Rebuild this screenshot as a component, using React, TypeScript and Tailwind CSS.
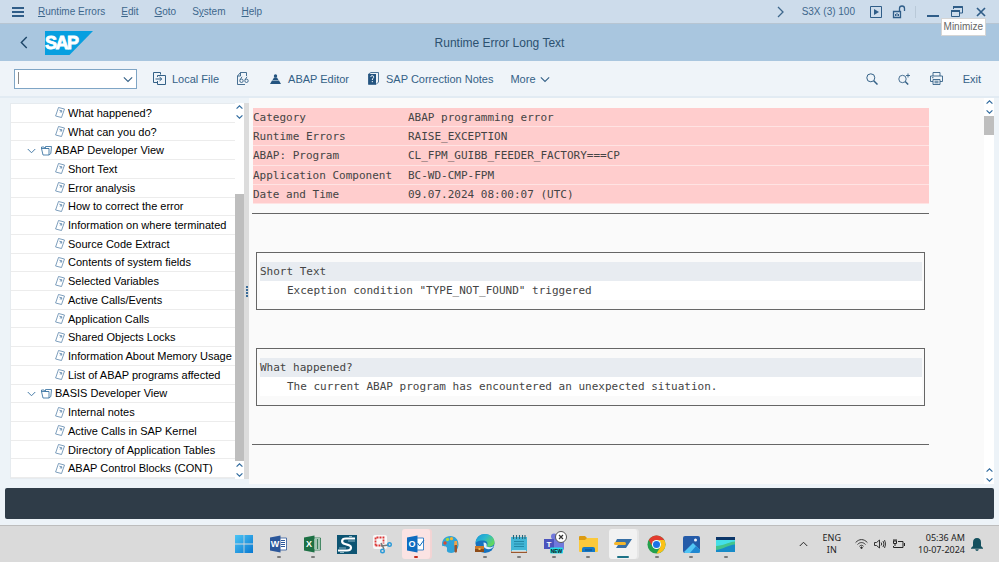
import type { ReactNode } from "react";

const sections = [
  { label: "What happened?" },
  { label: "What can you do?" },
  { label: "ABAP Developer View", folder: true },
  { label: "Short Text" },
  { label: "Error analysis" },
  { label: "How to correct the error" },
  { label: "Information on where terminated" },
  { label: "Source Code Extract" },
  { label: "Contents of system fields" },
  { label: "Selected Variables" },
  { label: "Active Calls/Events" },
  { label: "Application Calls" },
  { label: "Shared Objects Locks" },
  { label: "Information About Memory Usage" },
  { label: "List of ABAP programs affected" },
  { label: "BASIS Developer View", folder: true },
  { label: "Internal notes" },
  { label: "Active Calls in SAP Kernel" },
  { label: "Directory of Application Tables" },
  { label: "ABAP Control Blocks (CONT)" },
];

const summary = [
  ["Category", "ABAP programming error"],
  ["Runtime Errors", "RAISE_EXCEPTION"],
  ["ABAP: Program", "CL_FPM_GUIBB_FEEDER_FACTORY===CP"],
  ["Application Component", "BC-WD-CMP-FPM"],
  ["Date and Time", "09.07.2024 08:00:07 (UTC)"],
];

function Chevron({ dir, className }: { dir: "up" | "down" | "left" | "right"; className: string }) {
  const d = {
    up: "M1 8 6 3l5 5",
    down: "M1 4l5 5 5-5",
    left: "M9 1 4 6l5 5",
    right: "M4 1l5 5-5 5",
  }[dir];
  return (
    <svg viewBox="0 0 12 12" className={className} fill="none" stroke="currentColor" strokeWidth="1.300">
      <path d={d} />
    </svg>
  );
}

function MenuBar() {
  const btn = "flex h-5 items-center justify-center";
  return (
    <header className="flex h-[23px] items-center bg-[#cddceb] text-[#3d678c]">
      <button aria-label="Menu" className="ml-3 mr-[14px] flex flex-col gap-[2px]">
        <span className="h-[2px] w-3 bg-[#2f5d88]" />
        <span className="h-[2px] w-3 bg-[#2f5d88]" />
        <span className="h-[2px] w-3 bg-[#2f5d88]" />
      </button>
      <nav className="flex flex-1 gap-4 text-[10px]">
        <button><u>R</u>untime Errors</button>
        <button><u>E</u>dit</button>
        <button><u>G</u>oto</button>
        <button>S<u>y</u>stem</button>
        <button><u>H</u>elp</button>
      </nav>
      <button aria-label="Next session" className={btn}><Chevron dir="right" className="size-3" /></button>
      <span className="ml-4 text-[10px]">S3X (3) 100</span>
      <button aria-label="Run" className={btn + " ml-[14px]"}>
        <svg viewBox="0 0 14 14" className="size-[14px]" fill="none" stroke="#2f5d88">
          <path d="M1.5 1.5h11v11h-11z" /><path d="M5 4v6l5-3z" fill="#2f5d88" stroke="none" />
        </svg>
      </button>
      <button aria-label="Unlock" className={btn + " ml-[9px]"}>
        <svg viewBox="0 0 14 14" className="size-[14px]" fill="none" stroke="#2f5d88">
          <path d="M1.5 6.5h7v6h-7zM7.500 6.500V3.500a2.500 2.500 0 0 1 5 0V6" strokeWidth="1.300" /><path d="M5 8v3M3.500 9v2M6.500 9v2" />
        </svg>
      </button>
      <span className="ml-[9px] h-3 w-px bg-[#b9c9d8]" />
      <button aria-label="Minimize" className={btn + " ml-[11px]"}>
        <svg viewBox="0 0 12 12" className="size-3"><path d="M0 9h12v2H0z" fill="#2f5d88" /></svg>
      </button>
      <button aria-label="Restore" className={btn + " ml-[11px]"}>
        <svg viewBox="0 0 13 13" className="size-[13px]" fill="none" stroke="#2f5d88">
          <path d="M3.500 4V1.500h9V8H10M1.500 5.500h8v6h-8z" /><path d="M3 2h9.500M1 6h9" strokeWidth="2" />
        </svg>
      </button>
      <button aria-label="Close" className={btn + " mx-[13px]"}>
        <svg viewBox="0 0 10 10" className="size-[10px]" stroke="#2f5d88" strokeWidth="1.700"><path d="m1 1 8 8M9 1 1 9" /></svg>
      </button>
    </header>
  );
}

function TitleBar() {
  return (
    <div className="grid h-[38px] grid-cols-[1fr_auto_1fr] items-center border-t border-[#b7c5d2] bg-[#a9c6df]">
      <div className="flex items-center">
        <button aria-label="Back" className="ml-[17px] text-[#1d4668]"><Chevron dir="left" className="size-[13px]" /></button>
        <svg viewBox="0 0 48 24" className="ml-[15px] h-6 w-12" role="img" aria-label="SAP">
          <path d="M0 0h48L24.500 24H0z" fill="#079fe0" />
          <text x="0" y="18" fontFamily="Liberation Sans, sans-serif" fontWeight="700" fontSize="18" fill="#fff" stroke="#fff" strokeWidth=".8">
            <tspan x="0">S</tspan><tspan x="10.500">A</tspan><tspan x="22">P</tspan>
          </text>
        </svg>
      </div>
      <h1 className="text-xs text-[#2c5170]">Runtime Error Long Text</h1>
      <span />
    </div>
  );
}

function Toolbar() {
  const item = "flex items-center text-[11px] leading-4";
  return (
    <div className="flex h-[37px] items-center border-b-2 border-[#e2ebf3] bg-[#eff4f9] text-[#346187]">
      <div className="relative ml-[14px] w-[123px]">
        <input aria-label="Command" className="block h-5 w-full border border-[#7fa5c5] bg-white px-1 text-[11px] outline-none" />
        <span className="absolute left-1 top-[3px] h-3 w-px bg-[#888]" />
        <Chevron dir="down" className="absolute right-1 top-[5px] size-[10px]" />
      </div>
      <button className={item + " ml-4 gap-[6px]"}>
        <svg viewBox="0 0 13 13" className="size-[13px]" fill="none" stroke="currentColor">
          <path d="M4 10.500H.5V.5h7v2M4.500 9V12.500h8v-9h-8V5M2.500 7h6M6.500 5l2.300 2-2.300 2" />
        </svg>
        Local File
      </button>
      <button aria-label="Display" className={item + " ml-[17px]"}>
        <svg viewBox="0 0 13 13" className="size-[13px]" fill="none" stroke="currentColor" strokeWidth=".9">
          <path d="M1.500 12.500V4L4.500.5h6V4M1.500 4h3V.5M1.500 12.500H9" /><circle cx="5.500" cy="8.800" r="1.700" /><circle cx="10.500" cy="8.800" r="1.700" /><path d="M4 7.800 6 4.800M9 7.800l2-3" />
        </svg>
      </button>
      <button className={item + " ml-[21px] gap-[7px]"}>
        <svg viewBox="0 0 11 12" className="h-3 w-[11px]" fill="#245480">
          <circle cx="5.500" cy="3" r="1.700" /><path d="M4 4.500h3L8.500 7h-6zM2 7.500h7l2 3.500H0z" />
        </svg>
        ABAP Editor
      </button>
      <button className={item + " ml-[19px] gap-[7px]"}>
        <svg viewBox="0 0 11 13" className="h-[13px] w-[11px]">
          <path d="M.5 2 3 .5h7.500V10L8 12.500H.5z" fill="#eff4f9" stroke="#245480" strokeWidth=".8" /><path d="M.5 2H8v10H.5z" fill="#245480" />
          <path d="M2.700 5c.2-2 3.400-1.500 3 .2C5.500 6.200 4.300 6.300 4.300 8M4.300 9v1.200" fill="none" stroke="#fff" />
        </svg>
        SAP Correction Notes
      </button>
      <button className={item + " ml-[17px] gap-1"}>More <Chevron dir="down" className="size-[10px]" /></button>
      <div className="ml-auto flex items-center gap-5">
        <button aria-label="Find">
          <svg viewBox="0 0 12 12" className="block size-3" fill="none" stroke="currentColor"><circle cx="4.800" cy="4.800" r="4" /><path d="m7.700 7.700 3.800 3.800" strokeWidth="1.500" /></svg>
        </button>
        <button aria-label="Find next">
          <svg viewBox="0 0 12 12" className="block size-3" fill="none" stroke="currentColor" strokeWidth=".9"><circle cx="4.500" cy="6" r="3.700" /><path d="m7.200 8.600 3 3" strokeWidth="1.400" /><path d="M10 .5v4M8 2.500h4" /></svg>
        </button>
        <button aria-label="Print">
          <svg viewBox="0 0 13 13" className="block size-[13px]" fill="none" stroke="currentColor" strokeWidth=".9"><path d="M3 4V.5h7V4M3 9.500H.5V4h12v5.500H10M3 7.500h7v5H3zM4.500 9.200h4M4.500 10.800h4M2 5.700h1.500" /></svg>
        </button>
        <button className="mr-[18px] text-[11px] leading-4">Exit</button>
      </div>
    </div>
  );
}

function Arrows() {
  return (
    <span className="flex flex-col items-center gap-[2px] py-px text-[#2f6a9e]">
      <Chevron dir="up" className="size-[7px] stroke-2" />
      <Chevron dir="down" className="size-[7px] stroke-2" />
    </span>
  );
}

function Tree() {
  return (
    <aside className="flex py-[5px] pl-[10px]">
      <ul className="flex w-[225px] flex-col border-y border-l border-[#e6ebef] bg-white text-[11px] text-black">
        {sections.map((s) => (
          <li key={s.label} className="flex flex-1 items-center border-b border-[#ececec] whitespace-nowrap">
            {s.folder ? (
              <button className="flex items-center pl-4 leading-4">
                <Chevron dir="down" className="mr-[5px] size-[9px] text-[#4278a5]" />
                <svg viewBox="0 0 11 11" className="mr-[3px] size-[11px]" fill="none" stroke="#4278a5" strokeWidth=".9">
                  <path d="M.5 4V2h2.500l1 1.500h4V10H2L.500 3.500H8M4.500 3V1.500h6L9.800 8.500 8 10" />
                </svg>
                {s.label}
              </button>
            ) : (
              <button className="flex items-center pl-11 leading-4">
                <svg viewBox="0 0 10 11" className="mr-[3px] h-[11px] w-[10px]" fill="none" stroke="#6f94b5" strokeWidth=".9">
                  <path d="M3.500.5 9.500 2 6.500 10.500.6 9zM4.300 3.200l2.700.7-.8 1.800M7 3.900 4.800 5.200" />
                </svg>
                {s.label}
              </button>
            )}
          </li>
        ))}
      </ul>
      <div className="flex w-[9px] flex-col bg-white">
        <Arrows />
        <div className="flex-[73]" />
        <div className="flex-[266] bg-[#bebebe]" />
        <Arrows />
      </div>
      <div className="flex w-[5px] flex-col items-center justify-center gap-px bg-[#dcdcdc]">
        <span className="h-[2px] w-[2px] bg-[#3b6c98]" />
        <span className="h-[2px] w-[2px] bg-[#3b6c98]" />
        <span className="h-[2px] w-[2px] bg-[#3b6c98]" />
        <span className="h-[2px] w-[2px] bg-[#3b6c98]" />
      </div>
    </aside>
  );
}

function Box({ title, children }: { title: string; children: ReactNode }) {
  return (
    <section className="mx-1 flex h-[58px] flex-col justify-center border border-[#666] pr-[2px] pl-[3px]">
      <h2 className="h-[19px] bg-[#e8ecf1] leading-[19px]">{title}</h2>
      <p className="h-[19px] bg-white pl-[27px] leading-[19px]">{children}</p>
    </section>
  );
}

function Report() {
  return (
    <main className="flex flex-1 bg-[#fafafa]">
      <div className="mr-[55px] flex-1 pt-[10px] pl-[3px] font-['DejaVu_Sans_Mono',monospace] text-[11px] text-[#444]">
        <table className="ml-px h-24 w-[calc(100%-1px)] border-collapse">
          <tbody>
            {summary.map(([k, v]) => (
              <tr key={k} className="border-b border-[#ffe3e3] bg-[#ffcdcd]">
                <th scope="row" className="w-[155px] p-0 pt-px text-left leading-[17px] font-normal">{k}</th>
                <td className="p-0 pt-px leading-[17px]">{v}</td>
              </tr>
            ))}
          </tbody>
        </table>
        <hr className="mt-[9px] mb-[38px] border-[#666]" />
        <Box title="Short Text">Exception condition "TYPE_NOT_FOUND" triggered</Box>
        <div className="h-[38px]" />
        <Box title="What happened?">The current ABAP program has encountered an unexpected situation.</Box>
        <hr className="mt-[38px] border-[#666]" />
      </div>
      <div className="flex w-[10px] flex-col bg-white">
        <Arrows />
        <div className="h-[19px] bg-[#bebebe]" />
        <div className="flex-1" />
        <Arrows />
      </div>
    </main>
  );
}

function Office({ color, letter, children }: { color: string; letter: string; children: ReactNode }) {
  return (
    <svg viewBox="0 0 18 18" className="size-[18px]">
      <path d="M9 3h7.500v12H9z" fill="#fff" stroke={color} strokeWidth=".8" />
      {children}
      <path d="M0 2.500 10.500.5v17L0 15.500z" fill={color} />
      <text x="5" y="12.300" textAnchor="middle" fontFamily="Liberation Sans, sans-serif" fontWeight="700" fontSize="9" fill="#fff">{letter}</text>
    </svg>
  );
}

const apps: { name: string; open?: "idle" | "alert" | "active"; icon: ReactNode }[] = [
  { name: "Start", icon: (
    <svg viewBox="0 0 18 18" className="size-[18px]"><defs><linearGradient id="win" x2="1" y2="1"><stop stopColor="#4cc5f5" /><stop offset="1" stopColor="#0878d1" /></linearGradient></defs><path d="M0 0h8.600v8.600H0zM9.400 0H18v8.600H9.400zM0 9.400h8.600V18H0zM9.400 9.400H18V18H9.400z" fill="url(#win)" /></svg>
  ) },
  { name: "Word", open: "idle", icon: <Office color="#2b579a" letter="W"><path d="M11 5.500h4M11 7.500h4M11 9.500h4M11 11.500h4" stroke="#2b579a" /></Office> },
  { name: "Excel", open: "idle", icon: <Office color="#1d7044" letter="X"><path d="M11 5h5M11 7h5M11 9h5M11 11h5M11 13h5M13.500 4v10" stroke="#1d7044" strokeWidth=".8" /></Office> },
  { name: "Snagit", icon: (
    <svg viewBox="0 0 20 19" className="h-[19px] w-5"><path d="M0 0h20v19H0z" fill="#0d5472" /><path d="M18 3.500H9C4 3.500 4 8 8 9s6 1.500 6 3.500-2 3-4 3H1" fill="none" stroke="#fff" strokeWidth="2.200" /><path d="M18 6h-7M2 13h7M12 1.500h3M3 17.500h4" stroke="#bfe0ea" strokeWidth=".7" /></svg>
  ) },
  { name: "Snipping Tool", icon: (
    <svg viewBox="0 0 20 20" className="size-5"><rect x="1" y="1" width="14" height="14" rx="2" fill="#f8f8f8" /><path d="M3.500 11.500v-8h8v6M3.500 11.500h5" fill="none" stroke="#db3535" strokeWidth="1.800" strokeDasharray="2 1" /><path d="m9 9 3 6m-3-3 8-1" stroke="#777" strokeWidth="1.500" /><circle cx="10.500" cy="17" r="1.800" fill="none" stroke="#2c9bd9" strokeWidth="1.400" /><circle cx="17.500" cy="10.500" r="1.800" fill="none" stroke="#2c9bd9" strokeWidth="1.400" /></svg>
  ) },
  { name: "Outlook", open: "alert", icon: <Office color="#0f6cc0" letter="O"><path d="m10.500 8 2.200 3L17 5" fill="none" stroke="#0f6cc0" /></Office> },
  { name: "Paint", icon: (
    <svg viewBox="0 0 19 19" className="size-[19px]"><path d="M9.500 1C4 1 1 5 1 9.500c0 3 3 1 4.500 2.500s-1 4.500 2 5.500c6 2 10-3 10-8S14 1 9.500 1" fill="#2fa3d8" /><circle cx="4" cy="8" r="1.700" fill="#d74a32" /><circle cx="6.500" cy="4.500" r="1.700" fill="#a8d83d" /><circle cx="10.500" cy="3.700" r="1.600" fill="#f2b734" /><path d="M13.500 6h2.500l.5 5h-3.500z" fill="#f2a44a" /><path d="M13.500 10h2.500v6c0 2-2.500 2-2.500 0z" fill="#9c532c" /></svg>
  ) },
  { name: "Edge", open: "idle", icon: (
    <svg viewBox="0 0 20 20" className="size-5"><defs><linearGradient id="edge" x2="1" y2=".6"><stop stopColor="#1695d8" /><stop offset=".5" stopColor="#2cb7cf" /><stop offset="1" stopColor="#63d85c" /></linearGradient></defs><circle cx="10" cy="9.500" r="9.500" fill="#1572bf" /><path d="M.5 9C1 3 5 0 10 0c6 0 9.500 4 9.500 8 0 4-4 5.500-8 4.500 2-2 1-6-3-6C5 6.500 2 7 .5 9" fill="url(#edge)" /><path d="M8.500 8.500q4 0 3 4c3 1.500 6 .7 7.500-1-1 4-8 5-10 1.500z" fill="#dceefa" /><path d="M0 12h9v6H0z" fill="#c9792b" /><path d="M0 15h9v3H0z" fill="#8e4c18" /><path d="M3.500 14h2v2h-2z" fill="#f2c04d" /></svg>
  ) },
  { name: "Notepad", open: "idle", icon: (
    <svg viewBox="0 0 16 19" className="h-[19px] w-4"><path d="M0 2h16v14H0z" fill="#42b6d6" /><path d="M0 16.500h16V18H0z" fill="#9a572d" /><path d="M1 15.300h14v1.200H1z" fill="#eef8fb" /><path d="M3 6.500h10M3 9h10M3 11.500h10" stroke="#197c9b" strokeWidth=".8" /><path d="M2.500 0v4M5.500 0v4M8.500 0v4M11.500 0v4M14 0v4" stroke="#2a6679" strokeWidth="1.100" /></svg>
  ) },
  { name: "Teams", open: "idle", icon: (
    <svg viewBox="0 0 24 24" className="size-6 overflow-visible"><path d="M9 7h13v9c0 5-12 5-13 0z" fill="#7178dc" /><circle cx="12" cy="4.500" r="3" fill="#7178dc" /><path d="M2 7h10v10H2z" fill="#4b53bc" /><text x="7" y="15" textAnchor="middle" fontFamily="Liberation Sans, sans-serif" fontWeight="700" fontSize="8" fill="#fff">T</text><rect x="8" y="15.500" width="13" height="6" rx="1" fill="#25dce6" /><text x="14.500" y="20.500" textAnchor="middle" fontFamily="Liberation Sans, sans-serif" fontWeight="700" fontSize="5" fill="#111">NEW</text><circle cx="19" cy="5" r="5.500" fill="#fff" stroke="#555" /><path d="m17 3 4 4m0-4-4 4" stroke="#333" strokeWidth="1.200" /></svg>
  ) },
  { name: "File Explorer", open: "idle", icon: (
    <svg viewBox="0 0 19 17" className="h-[17px] w-[19px]"><path d="M0 1q0-1 1-1h5l2 2h10q1 0 1 1v12H0z" fill="#dc9b12" /><path d="M0 4h6l2-2h11v13q0 1-1 1H1q-1 0-1-1z" fill="#fbc93b" /><path d="M3 16v-3q0-2 2-2h9q2 0 2 2v3z" fill="#1579c6" /><path d="M6 14h7" stroke="#0c4c86" /></svg>
  ) },
  { name: "SAP Logon", open: "active", icon: (
    <svg viewBox="0 0 18 10" className="h-[10px] w-[18px]"><path d="M3 0h15l-6 9H2l2-3h6l1-2H1z" fill="#376fa5" /><rect y="3" width="12" height="3" rx="1.500" fill="#f4b62b" /></svg>
  ) },
  { name: "Chrome", open: "idle", icon: (
    <svg viewBox="0 0 20 20" className="size-[19px]"><circle cx="10" cy="10" r="9.500" fill="#24a14d" /><path d="M1.800 5.300A9.500 9.500 0 0 1 18.200 5.300H10a4.700 4.700 0 0 0-4 7z" fill="#e33b2e" /><path d="M18.200 5.300A9.500 9.500 0 0 1 10 19.500l4-7a4.700 4.700 0 0 0-4-7.200z" fill="#fbc116" /><circle cx="10" cy="10" r="4.800" fill="#fff" /><circle cx="10" cy="10" r="3.700" fill="#1c73e6" /></svg>
  ) },
  { name: "Photos", open: "idle", icon: (
    <svg viewBox="0 0 17 17" className="size-[17px]"><rect width="17" height="17" rx="2" fill="#245ba8" /><path d="M1 16 10 7l7 7v1q0 2-2 2H2z" fill="#52c5f4" /><path d="m7 17 6-7 4 4v1q0 2-2 2z" fill="#2087d1" /><circle cx="12.500" cy="4" r="1.500" fill="#f1f4fb" /></svg>
  ) },
  { name: "Remote Desktop", open: "idle", icon: (
    <svg viewBox="0 0 19 15" className="h-[15px] w-[19px]"><path d="M0 0h19v15H0z" fill="#178bc8" /><path d="M0 0h19v3H0z" fill="#0b3669" /><path d="M0 3h19v2C11 6 7 10 0 11z" fill="#45dfe8" /><path d="M0 9C7 9 12 5 19 4.500v3C12 8 8 12 0 13z" fill="#43c48d" /></svg>
  ) },
];

function Taskbar() {
  return (
    <footer className="flex h-[37px] items-center border-t border-[#bdbdbd] bg-[#dadada] font-['Noto_Sans',sans-serif] text-[#222]">
      <nav aria-label="Taskbar" className="ml-[227px] grid w-[516px] grid-cols-[repeat(15,1fr)]">
        {apps.map((a) => (
          <button
            key={a.name}
            aria-label={a.name}
            className={
              "relative mx-auto flex h-[30px] w-7 items-center justify-center rounded-[3px] " +
              (a.open === "alert" ? "bg-[#fbe3e3] shadow-[2px_0_0_#f3d4d4]" : a.open === "active" ? "bg-[#f2f2f2] shadow-[2px_0_0_#e6e6e6]" : "")
            }
          >
            {a.icon}
            {a.open && (
              <span
                className={
                  "absolute bottom-px h-[2px] rounded-full " +
                  (a.open === "active" ? "w-3 bg-[#1c7286]" : a.open === "alert" ? "w-1 bg-[#c42b1c]" : "w-1 bg-[#7a7a7a]")
                }
              />
            )}
          </button>
        ))}
      </nav>
      <div className="ml-auto mr-4 flex items-center">
        <button aria-label="Hidden icons"><Chevron dir="up" className="block size-[9px]" /></button>
        <button className="ml-[15px] text-center text-[9px] leading-3">ENG<br />IN</button>
        <button aria-label="Network, sound, battery" className="ml-[14px] flex items-center gap-[6px]">
          <svg viewBox="0 0 13 10" className="h-[10px] w-[13px]" fill="none" stroke="#222" strokeWidth=".9"><path d="M.6 3.600c3.500-4 8.300-4 11.800 0M2.500 5.500c2.500-2.600 5.500-2.600 8 0M4.400 7.300c1.500-1.400 2.700-1.400 4.200 0" /><circle cx="6.500" cy="8.700" r=".8" fill="#222" /></svg>
          <svg viewBox="0 0 12 10" className="h-[10px] w-3" fill="none" stroke="#222" strokeWidth=".9"><path d="M.5 3.500h2L5.500 1v8l-3-2.500h-2zM7.200 3.500q1 1.500 0 3M9 2q2 3 0 6M10.500 1q2.500 4 0 8" /></svg>
          <svg viewBox="0 0 13 10" className="h-[10px] w-[13px]" fill="none" stroke="#222"><path d="M6 2.500h5v6H1.500V7M12.500 4v3" /><path d="M1 2h4M2 0v2M4 0v2M1.500 2v2.500h3V2M3 4v3" /></svg>
        </button>
        <button className="ml-[13px] text-right text-[9px] leading-3">05:36 AM<br />10-07-2024</button>
        <button aria-label="Notifications" className="ml-[6px]">
          <svg viewBox="0 0 12 13" className="block h-[13px] w-3" fill="#14505e"><path d="M6 0q4 0 4 4.500V8l2 2v.7H0V10l2-2V4.500Q2 0 6 0M4.200 11.300h3.600Q7.500 13 6 13t-1.800-1.700" /></svg>
        </button>
      </div>
    </footer>
  );
}

export default function App() {
  return (
    <div className="relative flex min-h-screen flex-col bg-[#edf3f8] font-['Liberation_Sans',Arial,sans-serif]">
      <MenuBar />
      <div role="tooltip" className="absolute right-[13px] top-[18px] z-10 border border-[#d5d5d5] bg-white px-[2px] text-[10px] leading-4 text-[#666]">
        Minimize
      </div>
      <TitleBar />
      <Toolbar />
      <div className="flex flex-1 pr-[5px]">
        <Tree />
        <Report />
      </div>
      <div role="status" className="mx-[5px] mt-1 mb-[6px] h-[31px] rounded-[2px] bg-[#2f3c48]" />
      <Taskbar />
    </div>
  );
}
